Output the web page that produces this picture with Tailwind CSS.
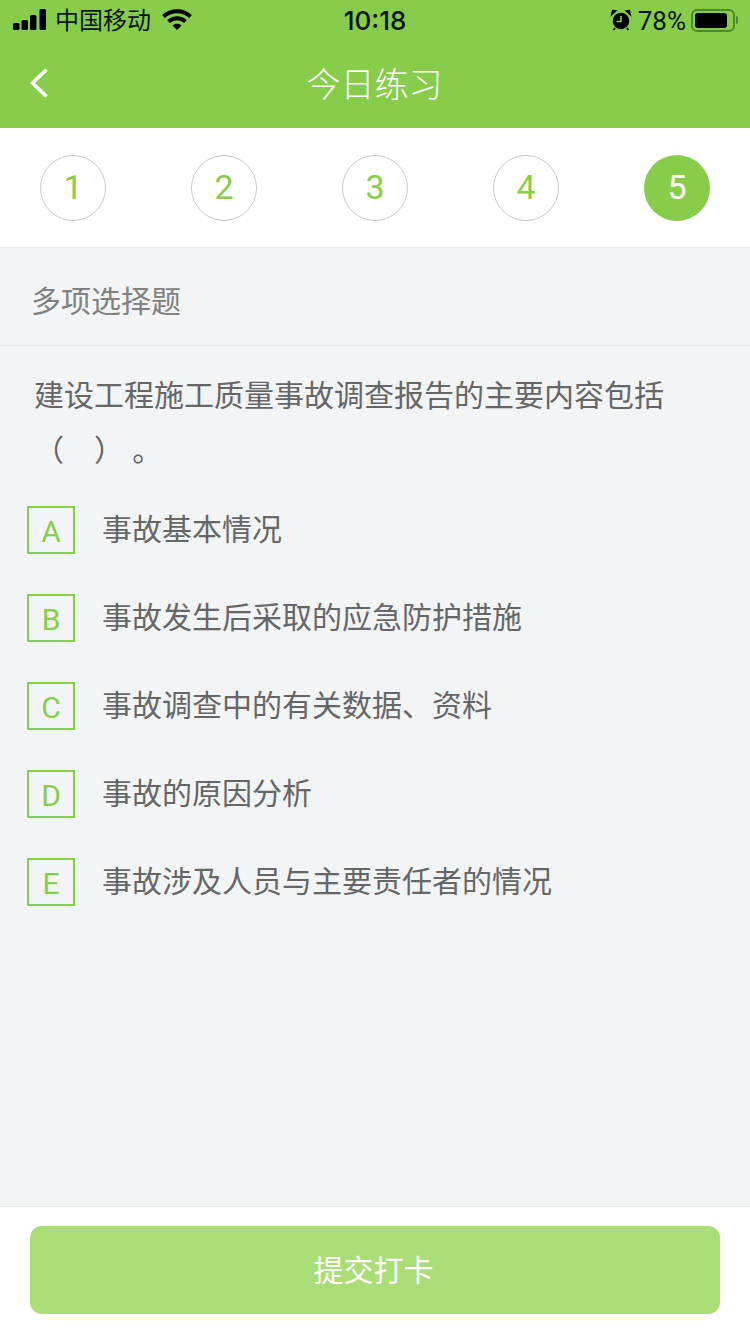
<!doctype html>
<html lang="zh"><head><meta charset="utf-8"><script src="https://cdn.jsdelivr.net/npm/@tailwindcss/browser@4"></script></head>
<body class="m-0">
<div class="w-[750px] h-[1334px] flex flex-col bg-[#f2f4f6] overflow-hidden font-['Liberation_Sans','Noto_Sans_CJK_SC',sans-serif]">
  <header class="h-[128px] shrink-0 bg-[#87cd4b] flex flex-col">
    <div class="h-[40px] shrink-0 relative flex items-center justify-between text-[#0b140a]">
      <div class="flex items-center pl-[13px]">
        <svg width="34" height="22" viewBox="0 0 34 22" fill="#000"><rect x="0" y="14" width="6.500" height="7" rx="1.500"/><rect x="8.500" y="11" width="6.500" height="10" rx="1.500"/><rect x="17" y="6" width="6.500" height="15" rx="1.500"/><rect x="26.500" y="0" width="6.500" height="21" rx="1.500"/></svg>
        <span class="ml-[8px] text-[24px] leading-[30px] relative top-[1px]">中国移动</span>
        <svg class="ml-[11px]" width="30" height="22" viewBox="0 0 30 22"><path d="M1.500 7.500C9 0.500 21 0.500 28.500 7.500" fill="none" stroke="#000" stroke-width="4"/><path d="M6.500 12.500C11.500 8 18.500 8 23.500 12.500" fill="none" stroke="#000" stroke-width="4"/><path d="M10.500 16.500C13 14.300 17 14.300 19.500 16.500L15 21Z" fill="#000"/></svg>
      </div>
      <span class="absolute left-0 right-0 text-center font-['Inter',sans-serif] text-[26px] font-medium leading-[40px] pointer-events-none top-[1px]">10:18</span>
      <div class="flex items-center pr-[12px]">
        <svg width="22" height="22" viewBox="0 0 22 22"><circle cx="11" cy="12" r="8.300" fill="#000"/><path d="M11 7V12.500H6.500" fill="none" stroke="#87cd4b" stroke-width="1.600"/><path d="M1.500 6L6 1.800L2.500 1.500ZM20.500 6L16 1.800L19.500 1.500Z" fill="#000" stroke="#000" stroke-width="1.200"/><path d="M5 19L3.500 21M17 19L18.500 21" stroke="#000" stroke-width="1.600"/></svg>
        <span class="ml-[6px] font-['Roboto',sans-serif] font-normal text-[26px] leading-[30px] relative top-[1px]">78%</span>
        <div class="ml-[5px] w-[44px] h-[23px] rounded-[6px] border-2 border-[#4e8a2b] p-[2px]"><div class="w-[32px] h-full rounded-[3px] bg-black"></div></div>
        <div class="ml-[1px] w-[2px] h-[8px] bg-[#4e8a2b] rounded-r-sm"></div>
      </div>
    </div>
    <div class="relative flex-1 flex items-center justify-center">
      <svg class="absolute left-[29px] top-[27px]" width="20" height="32" viewBox="0 0 20 32"><path d="M17.500 2.500L3.500 16L17.500 29.500" fill="none" stroke="#fff" stroke-width="3.600"/></svg>
      <h1 class="text-white text-[34px] leading-[40px] font-light m-0 pt-[1px] pr-[1px]">今日练习</h1>
    </div>
  </header>

  <nav class="h-[120px] shrink-0 bg-white border-b border-[#e7e7e7] flex items-center justify-between px-[40px] font-['Roboto',sans-serif] font-normal">
    <div class="w-[66px] h-[66px] rounded-full border border-[#c9c9c9] flex items-center justify-center text-[#87cd4b] text-[34px]">1</div>
    <div class="w-[66px] h-[66px] rounded-full border border-[#c9c9c9] flex items-center justify-center text-[#87cd4b] text-[34px]">2</div>
    <div class="w-[66px] h-[66px] rounded-full border border-[#c9c9c9] flex items-center justify-center text-[#87cd4b] text-[34px]">3</div>
    <div class="w-[66px] h-[66px] rounded-full border border-[#c9c9c9] flex items-center justify-center text-[#87cd4b] text-[34px]">4</div>
    <div class="w-[66px] h-[66px] rounded-full bg-[#87cd4b] flex items-center justify-center text-white text-[34px]">5</div>
  </nav>

  <div class="h-[98px] shrink-0 border-b border-[#e7e9eb] flex items-center pl-[31px] pt-[10px] text-[#808080] text-[30px] leading-[40px]">多项选择题</div>

  <main class="flex-1 min-h-0">
    <p class="m-0 pt-[22px] pl-[34px] pr-[80px] text-[#666] text-[30px] leading-[56px]">建设工程施工质量事故调查报告的主要内容包括</p>
    <p class="m-0 pl-[34px] text-[#666] text-[30px] leading-[54px] whitespace-pre">（　） 。</p>
    <ul class="mt-[28px] pl-[27px] flex flex-col gap-[40px] list-none">
      <li class="flex items-center h-[48px]"><span class="w-[48px] h-[48px] border-2 border-[#87cd4b] flex items-center justify-center text-[#87cd4b] font-['Roboto',sans-serif] font-normal text-[30px] pt-[2px]">A</span><span class="ml-[27px] text-[#666] text-[30px] leading-[40px]">事故基本情况</span></li>
      <li class="flex items-center h-[48px]"><span class="w-[48px] h-[48px] border-2 border-[#87cd4b] flex items-center justify-center text-[#87cd4b] font-['Roboto',sans-serif] font-normal text-[30px] pt-[2px]">B</span><span class="ml-[27px] text-[#666] text-[30px] leading-[40px]">事故发生后采取的应急防护措施</span></li>
      <li class="flex items-center h-[48px]"><span class="w-[48px] h-[48px] border-2 border-[#87cd4b] flex items-center justify-center text-[#87cd4b] font-['Roboto',sans-serif] font-normal text-[30px] pt-[2px]">C</span><span class="ml-[27px] text-[#666] text-[30px] leading-[40px]">事故调查中的有关数据、资料</span></li>
      <li class="flex items-center h-[48px]"><span class="w-[48px] h-[48px] border-2 border-[#87cd4b] flex items-center justify-center text-[#87cd4b] font-['Roboto',sans-serif] font-normal text-[30px] pt-[2px]">D</span><span class="ml-[27px] text-[#666] text-[30px] leading-[40px]">事故的原因分析</span></li>
      <li class="flex items-center h-[48px]"><span class="w-[48px] h-[48px] border-2 border-[#87cd4b] flex items-center justify-center text-[#87cd4b] font-['Roboto',sans-serif] font-normal text-[30px] pt-[2px]">E</span><span class="ml-[27px] text-[#666] text-[30px] leading-[40px]">事故涉及人员与主要责任者的情况</span></li>
    </ul>
  </main>

  <footer class="h-[128px] shrink-0 bg-white border-t border-[#e7e9eb] px-[30px] pt-[19px]">
    <button class="w-[690px] h-[88px] rounded-[12px] bg-[#aadc78] text-white text-[30px] border-0 pr-[3px]">提交打卡</button>
  </footer>
</div>
</body></html>
